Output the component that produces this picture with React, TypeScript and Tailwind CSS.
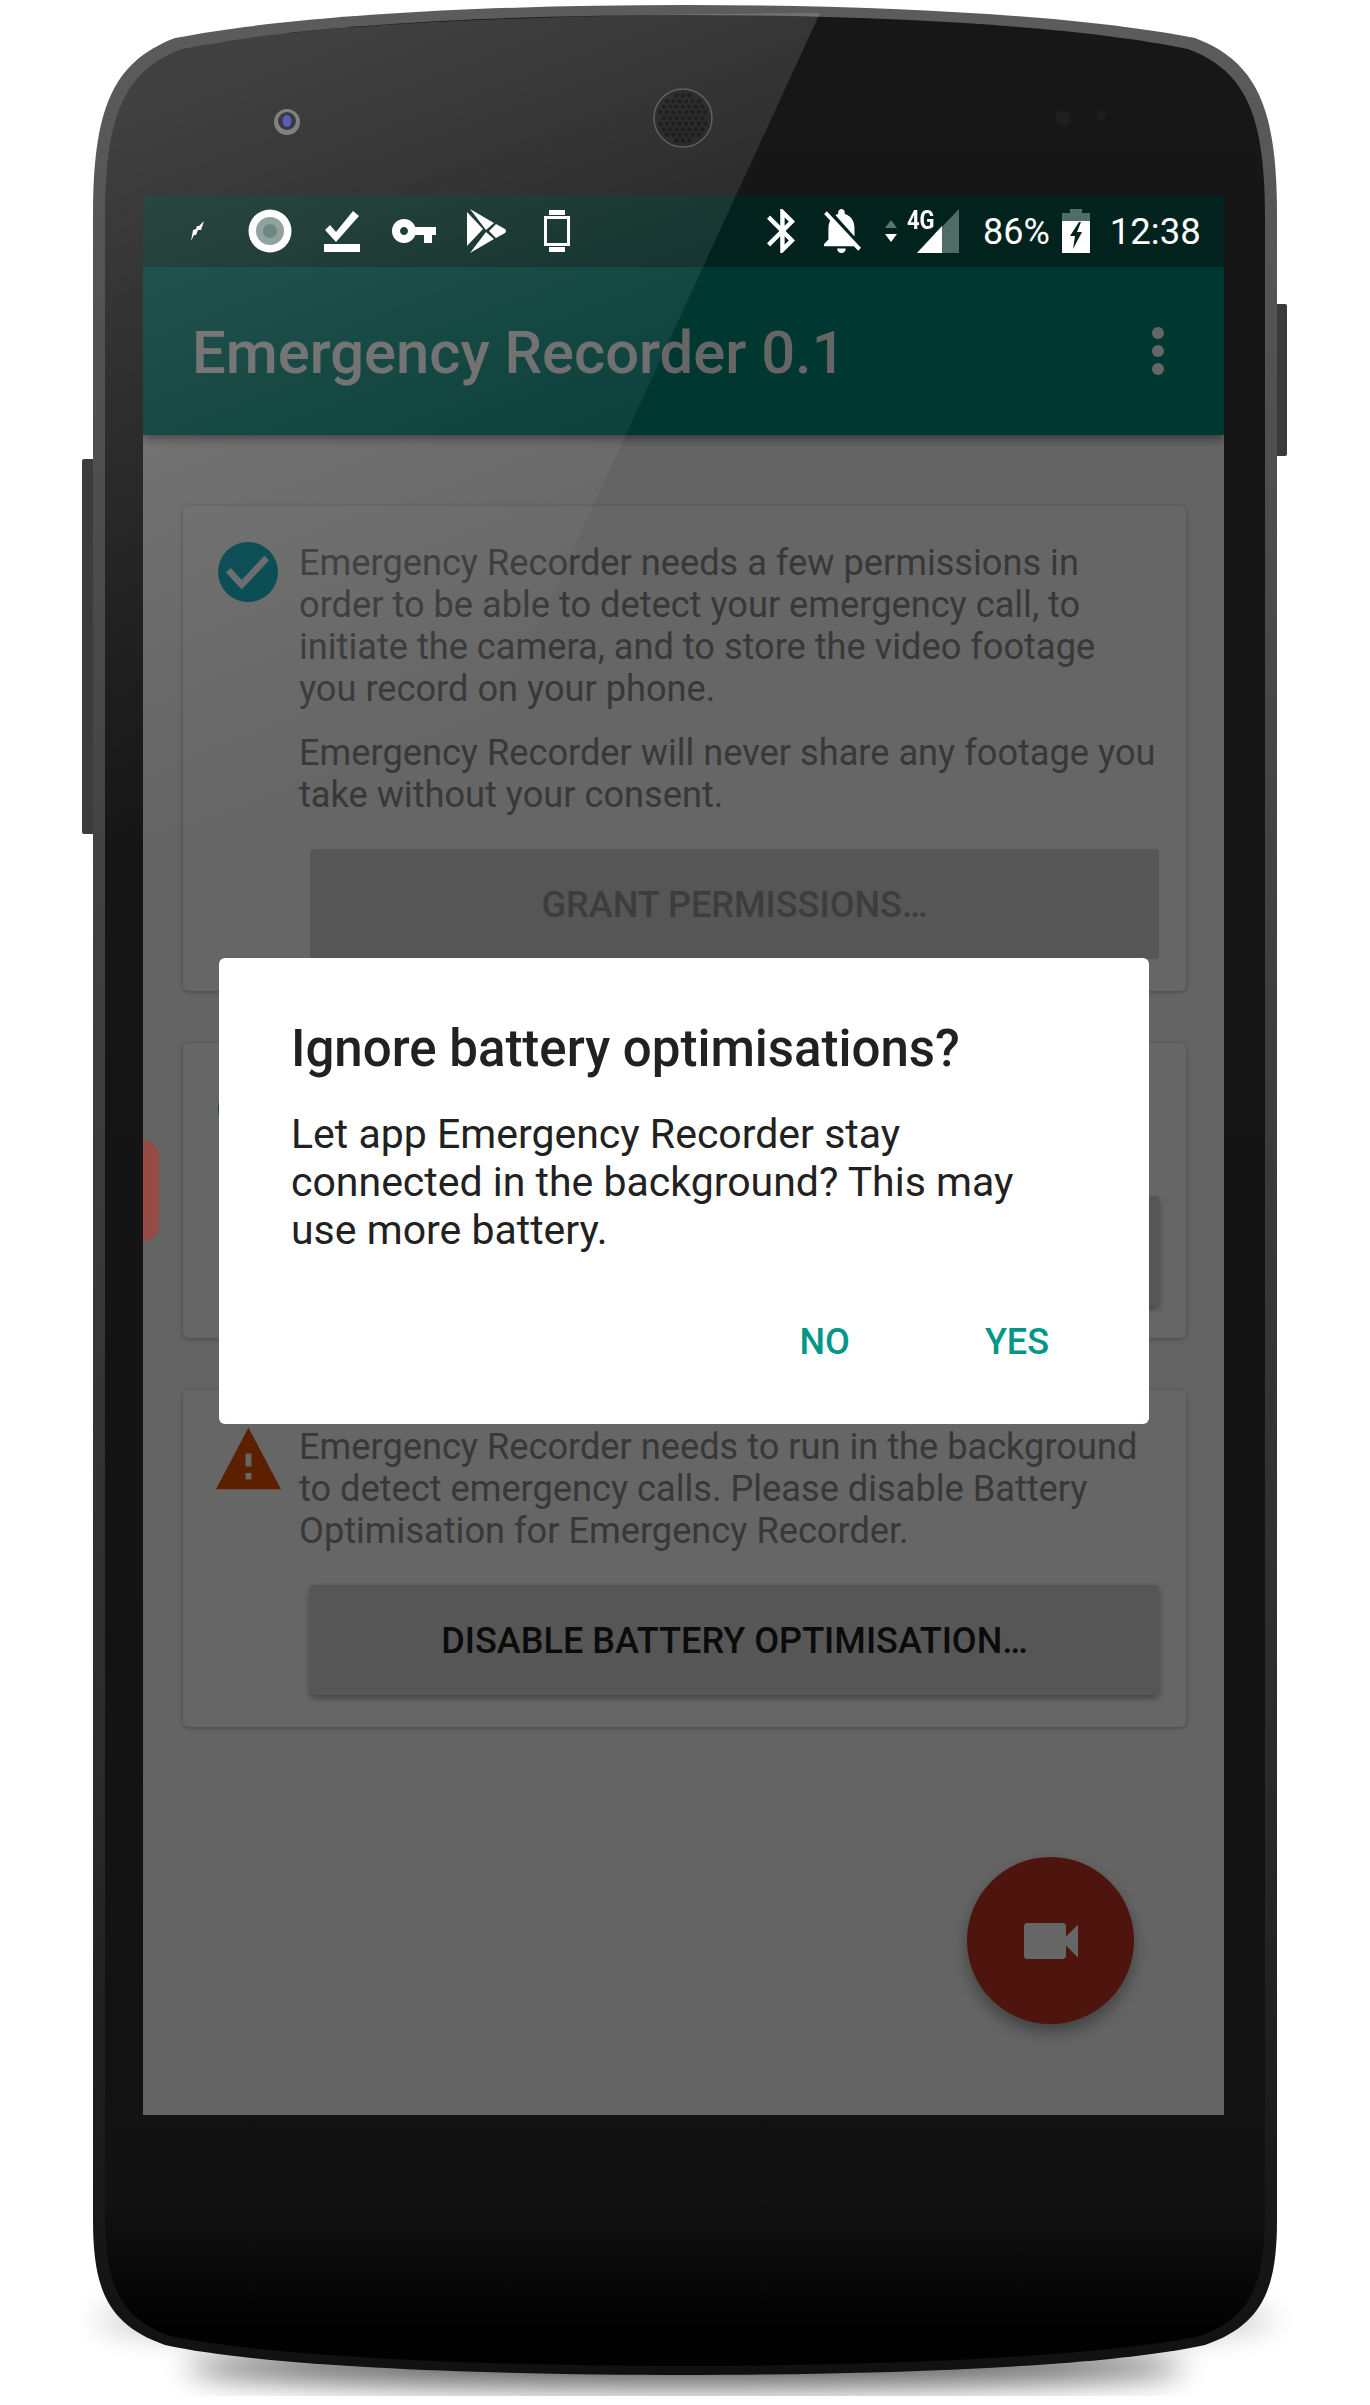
const roboto = '[font-family:Roboto,sans-serif]';

const BODY_OUTER =
  'M93 215 C93 110 112 62 175 38 C300 14 500 5 685 5 C870 5 1070 14 1195 38 C1258 62 1277 110 1277 215 L1277 2220 C1277 2290 1262 2325 1205 2345 C1100 2368 870 2375 685 2375 C500 2375 270 2368 165 2345 C108 2325 93 2290 93 2220 Z';
const BODY_INNER =
  'M105 220 C105 118 122 72 182 49 C305 24 505 15 685 15 C865 15 1065 24 1188 49 C1248 72 1265 118 1265 220 L1265 2215 C1265 2285 1250 2318 1200 2336 C1095 2358 865 2366 685 2366 C505 2366 275 2358 170 2336 C120 2318 105 2285 105 2215 Z';

function SpeakerHoles() {
  const holes: { x: number; y: number }[] = [];
  for (let row = -4; row <= 4; row++) {
    for (let col = -4; col <= 4; col++) {
      const x = 683 + col * 6.4 + (row % 2 === 0 ? 0 : 3.2);
      const y = 118 + row * 5.6;
      if (Math.hypot(x - 683, y - 118) < 24) holes.push({ x, y });
    }
  }
  return (
    <>
      {holes.map((h, i) => (
        <circle key={i} cx={h.x} cy={h.y} r="2.3" fill="#000" />
      ))}
    </>
  );
}

function PhoneBody() {
  return (
    <svg className="absolute inset-0" width="1370" height="2405" viewBox="0 0 1370 2405">
      <defs>
        <linearGradient id="rim" x1="0" y1="0" x2="0" y2="1">
          <stop offset="0" stopColor="#5c5c5c" />
          <stop offset="0.4" stopColor="#404040" />
          <stop offset="0.75" stopColor="#2a2a2a" />
          <stop offset="1" stopColor="#111111" />
        </linearGradient>
        <linearGradient id="face" x1="0" y1="0" x2="0" y2="1">
          <stop offset="0" stopColor="#171717" />
          <stop offset="0.93" stopColor="#121212" />
          <stop offset="0.985" stopColor="#010101" />
        </linearGradient>
        <filter id="soft" x="-20%" y="-20%" width="140%" height="140%">
          <feGaussianBlur stdDeviation="14" />
        </filter>
      </defs>
      <ellipse cx="685" cy="2320" rx="590" ry="40" fill="#000" opacity="0.18" filter="url(#soft)" />
      <ellipse cx="685" cy="2368" rx="500" ry="20" fill="#000" opacity="0.6" filter="url(#soft)" />
      <rect x="82" y="459" width="14" height="375" rx="2" fill="#3c3c3c" />
      <rect x="1274" y="304" width="13" height="152" rx="2" fill="#3a3a3a" />
      <path d={BODY_OUTER} fill="url(#rim)" />
      <path d={BODY_INNER} fill="url(#face)" />
      <circle cx="287" cy="122" r="13" fill="#6a6a6a" />
      <circle cx="287" cy="121" r="9" fill="#15151c" />
      <ellipse cx="287" cy="121" rx="4.5" ry="6" fill="#3a3ea8" />
      <circle cx="683" cy="118" r="29" fill="#101010" stroke="#4a4a4a" strokeWidth="1.5" />
      <SpeakerHoles />
      <circle cx="1063" cy="118" r="8" fill="#1e1e1e" />
      <circle cx="1101" cy="115" r="5" fill="#1e1e1e" />
    </svg>
  );
}

function Gloss() {
  return (
    <svg className="absolute inset-0 z-40 pointer-events-none" width="1370" height="2405" viewBox="0 0 1370 2405">
      <defs>
        <linearGradient id="gloss" gradientUnits="userSpaceOnUse" x1="150" y1="100" x2="400" y2="760">
          <stop offset="0" stopColor="#fff" stopOpacity="0.18" />
          <stop offset="0.4" stopColor="#fff" stopOpacity="0.1" />
          <stop offset="0.8" stopColor="#fff" stopOpacity="0.03" />
          <stop offset="1" stopColor="#fff" stopOpacity="0" />
        </linearGradient>
      </defs>
      <path d="M105 220 C105 118 122 72 182 49 C305 24 505 15 820 13 L430 860 L105 860 Z" fill="url(#gloss)" />
    </svg>
  );
}

function StatusBar() {
  return (
    <div className={`relative z-20 flex items-center h-[72px] bg-[#02231d] text-white ${roboto}`}>
      <svg className="ml-[47px]" width="16" height="22" viewBox="0 0 16 22">
        <path d="M14 1 L11 10 L8 10 L6 15 L4 15 L1 21 L3 10 L6 9 L7 6 L9 6 Z" fill="#fff" />
      </svg>
      <svg className="ml-[42px]" width="44" height="44" viewBox="0 0 44 44">
        <circle cx="22" cy="22" r="21.5" fill="#fff" />
        <circle cx="22" cy="22" r="14" fill="#7f9590" />
        <circle cx="22" cy="22" r="7" fill="#5a746e" />
      </svg>
      <svg className="ml-[32px]" width="36" height="44" viewBox="0 0 36 44">
        <path d="M1 21 L6 16 L12 23 L29 2 L35 7 L12 33 Z" fill="#fff" />
        <rect x="0" y="35" width="36" height="8" fill="#fff" />
      </svg>
      <svg className="ml-[31px]" width="48" height="48" viewBox="1 0 23 24">
        <path
          d="M12.65 10C11.83 7.67 9.61 6 7 6c-3.31 0-6 2.69-6 6s2.69 6 6 6c2.61 0 4.83-1.67 5.65-4H17v4h4v-4h2v-4H12.65zM7 14c-1.1 0-2-.9-2-2s.9-2 2-2 2 .9 2 2-.9 2-2 2z"
          fill="#fff"
        />
      </svg>
      <svg className="ml-[27px]" width="40" height="44" viewBox="0 0 40 44">
        <path d="M1 3 L17 20 L1 37 Z" fill="#fff" />
        <path d="M4 0 L28 14 L20 21 Z M4 44 L28 30 L20 23 Z M23 22 L30 15 L39 20 Q41 22 39 24 L30 29 Z" fill="#fff" />
      </svg>
      <svg className="ml-[38px]" width="26" height="42" viewBox="0 0 26 42">
        <rect x="5" y="0" width="16" height="5" fill="#fff" />
        <rect x="5" y="37" width="16" height="5" fill="#fff" />
        <rect x="1.5" y="7.5" width="23" height="27" fill="none" stroke="#fff" strokeWidth="3" />
      </svg>

      <svg className="ml-[197px]" width="28" height="44" viewBox="5 2 12.7 20" preserveAspectRatio="none">
        <path
          d="M17.71 7.71L12 2h-1v7.59L6.41 5 5 6.41 10.59 12 5 17.59 6.41 19 11 14.41V22h1l5.71-5.71-4.3-4.29 4.3-4.29zM13 5.83l1.88 1.88L13 9.59V5.83zm1.88 10.46L13 18.17v-3.76l1.88 1.88z"
          fill="#fff"
        />
      </svg>
      <svg className="ml-[28px]" width="38" height="44" viewBox="3.5 2.5 17.5 19.5" preserveAspectRatio="none">
        <path
          d="M20 18.69L7.84 6.14 5.27 3.49 4 4.76l2.8 2.8v.01c-.52.99-.8 2.16-.8 3.42v5l-2 2v1h13.73l2 2L21 19.72l-1-1.03zM12 22c1.11 0 2-.89 2-2h-4c0 1.11.89 2 2 2zm6-7.32V11c0-3.08-1.64-5.64-4.5-6.32V4c0-.83-.67-1.5-1.5-1.5s-1.5.67-1.5 1.5v.68c-.15.03-.29.08-.42.12-.1.03-.2.07-.3.11h-.01c-.2.08-.4.17-.59.27-.01 0-.01 0-.02.01L18 14.68z"
          fill="#fff"
        />
      </svg>
      <svg className="ml-[23px]" width="14" height="22" viewBox="0 0 14 22">
        <path d="M7 0 L13 8 L1 8 Z" fill="#5a746e" />
        <path d="M1 14 L13 14 L7 22 Z" fill="#fff" />
      </svg>
      <div className="relative w-[60px] h-[44px] ml-[4px]">
        <svg className="absolute left-[15px] top-0" width="44" height="44" viewBox="0 0 44 44">
          <path d="M42 0 L42 44 L0 44 Z" fill="#4f6d66" />
          <path d="M25 17 L25 44 L0 44 Z" fill="#fff" />
        </svg>
        <span className="absolute left-[5px] top-[2px] text-[25px] leading-[20px] font-bold scale-x-[0.88] origin-left">4G</span>
      </div>
      <span className="ml-[21px] mt-[2px] text-[36px] leading-none">86%</span>
      <svg className="ml-[12px]" width="28" height="44" viewBox="0 0 28 44">
        <path d="M8 0 H20 V4 H28 V12 H0 V4 H8 Z" fill="#4f6d66" />
        <path fillRule="evenodd" d="M0 12 H28 V44 H0 Z M17 13 L8 27 H13 L11 40 L20 23 H15 L19 13 Z" fill="#fff" />
      </svg>
      <span className="ml-[20px] mt-[2px] text-[36.5px] leading-none">12:38</span>
    </div>
  );
}

function CheckIcon({ className }: { className?: string }) {
  return (
    <svg className={className} width="60" height="60" viewBox="0 0 60 60">
      <circle cx="30" cy="30" r="30" fill="#00acc1" />
      <path d="M10.3 28.3 L23.7 42.7 L48.7 16" fill="none" stroke="#fff" strokeWidth="6.5" />
    </svg>
  );
}

function WarningIcon({ className }: { className?: string }) {
  return (
    <svg className={className} width="71" height="78" viewBox="0 0 24 24" preserveAspectRatio="none">
      <path d="M1 21h22L12 2 1 21zm12-3h-2v-2h2v2zm0-4h-2v-4h2v4z" fill="#e65100" />
    </svg>
  );
}

function Card({ icon, children, button, disabled }: { icon: React.ReactNode; children: React.ReactNode; button: string; disabled?: boolean }) {
  return (
    <div className="flex bg-white rounded-[6px] shadow-[0_1px_5px_rgba(0,0,0,0.3)] pl-[35px] pr-[26px] pt-[36px] pb-[32px]">
      <div className="w-[81px] shrink-0">{icon}</div>
      <div className="flex-1">
        {children}
        <button
          className={`block w-[849px] ml-[11px] h-[110px] mt-[33px] pt-[2px] rounded-[4px] bg-[#d6d7d7] text-[36.1px] font-medium ${
            disabled ? 'text-[#9a9a9a]' : 'text-[#1d1d1d] shadow-[0_3px_6px_rgba(0,0,0,0.35)]'
          }`}
        >
          {button}
        </button>
      </div>
    </div>
  );
}

function Dialog() {
  return (
    <div className={`absolute z-30 left-[76px] top-[763px] w-[930px] h-[466px] bg-white rounded-[6px] pl-[72px] pr-[60px] pt-[62px] ${roboto}`}>
      <h2 className="text-[51px] leading-[58px] font-medium text-[#212121]">Ignore battery optimisations?</h2>
      <p className="mt-[32px] text-[41px] leading-[48px] text-[#212121] w-[760px]">
        Let app Emergency Recorder stay connected in the background? This may use more battery.
      </p>
      <div className="flex justify-end mt-[68px] gap-[135px] pr-[40px] text-[36px] leading-[40px] font-medium text-[#009688]">
        <span>NO</span>
        <span>YES</span>
      </div>
    </div>
  );
}

export default function App() {
  return (
    <div className="relative w-[1370px] h-[2405px] bg-white overflow-hidden">
      <PhoneBody />
      <div className="relative ml-[143px] pt-[195px] w-[1081px]">
        <div className="relative h-[1920px] bg-[#fafafa] overflow-hidden">
          <StatusBar />
          <div className={`relative h-[168px] bg-[#00897b] text-white flex items-center justify-between pl-[49px] pr-[60px] shadow-[0_3px_10px_rgba(0,0,0,0.5)] ${roboto}`}>
            <span className="text-[59.7px] leading-none font-medium pt-[5px]">Emergency Recorder 0.1</span>
            <span className="flex flex-col gap-[6px]">
              <span className="w-[12px] h-[12px] rounded-full bg-white" />
              <span className="w-[12px] h-[12px] rounded-full bg-white" />
              <span className="w-[12px] h-[12px] rounded-full bg-white" />
            </span>
          </div>
          <div className={`flex flex-col gap-[52px] pl-[40px] pr-[38px] pt-[71px] text-[36.2px] leading-[42px] text-[#8c8c8c] ${roboto}`}>
            <Card icon={<CheckIcon />} button="GRANT PERMISSIONS…" disabled>
              <p className="w-[857px]">Emergency Recorder needs a few permissions in order to be able to detect your emergency call, to initiate the camera, and to store the video footage you record on your phone.</p>
              <p className="w-[857px] mt-[22px]">Emergency Recorder will never share any footage you take without your consent.</p>
            </Card>
            <Card icon={<CheckIcon />} button="">
              <div className="h-[84px]" />
            </Card>
            <Card icon={<WarningIcon className="-ml-[5px] -mt-[5px]" />} button="DISABLE BATTERY OPTIMISATION…">
              <p className="w-[857px]">Emergency Recorder needs to run in the background to detect emergency calls. Please disable Battery Optimisation for Emergency Recorder.</p>
            </Card>
          </div>
          <button className="absolute left-[824px] top-[1662px] w-[167px] h-[167px] rounded-full bg-[#c33223] flex items-center justify-center shadow-[0_8px_16px_rgba(0,0,0,0.35)]">
            <svg width="72" height="72" viewBox="0 0 24 24">
              <path d="M17 10.5V7c0-.55-.45-1-1-1H4c-.55 0-1 .45-1 1v10c0 .55.45 1 1 1h12c.55 0 1-.45 1-1v-3.5l4 4v-11l-4 4z" fill="#fff" />
            </svg>
          </button>
          <div className="absolute inset-x-0 top-[72px] bottom-0 z-10 bg-black/60" />
          <div className="absolute z-20 left-0 top-[945px] w-[16px] h-[101px] bg-[#964c45] rounded-r-[16px]" />
          <Dialog />
        </div>
      </div>
      <Gloss />
    </div>
  );
}
